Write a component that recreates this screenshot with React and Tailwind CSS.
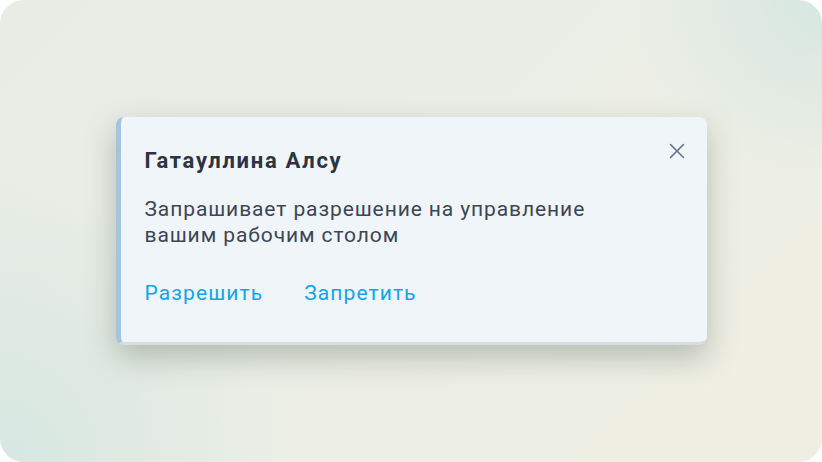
import React from "react";

export default function App() {
  return (
    <div className="w-[822px] h-[462px] bg-white" style={{ fontFamily: "Roboto, 'Noto Sans', sans-serif" }}>
      <div className="w-full h-full rounded-[24px] overflow-hidden flex items-center justify-center bg-[linear-gradient(135deg,#e7ece5_0%,#ebeee6_45%,#eeefe4_75%,#efeee2_100%)] relative">
        <div className="absolute inset-0 bg-[radial-gradient(circle_at_100%_0%,rgba(195,224,222,0.55),transparent_20%),radial-gradient(circle_at_0%_100%,rgba(200,226,222,0.6),transparent_30%)]" />
        <div className="relative w-[591px] h-[228px] rounded-[8px] bg-[#f0f5fa] border-l-[5px] border-l-[#a3c4e2] border-b-[3px] border-b-[#d9dde2] shadow-[0_12px_30px_rgba(90,105,90,0.38)] pl-[24px] pr-[24px] pt-[29px] flex flex-col">
          <div className="flex items-start justify-between">
            <div className="text-[22px] leading-[30px] font-bold text-[#2a3442] tracking-[1.7px]">Гатауллина Алсу</div>
            <button className="mt-[-7px] mr-[-6px] w-[24px] h-[24px] flex items-center justify-center text-[#62738a]">
              <svg width="16" height="16" viewBox="0 0 16 16" fill="none" stroke="currentColor" strokeWidth="1.6" strokeLinecap="round">
                <path d="M1.5 1.5 L14.5 14.5 M14.5 1.5 L1.5 14.5" />
              </svg>
            </button>
          </div>
          <div className="mt-[20px] text-[21px] leading-[26px] text-[#3c4654] tracking-[0.9px]">
            Запрашивает разрешение на управление
            <br />
            вашим рабочим столом
          </div>
          <div className="mt-[32px] flex gap-[41px] text-[21px] leading-[26px] text-[#0ea7ea] tracking-[1.1px]">
            <span>Разрешить</span>
            <span>Запретить</span>
          </div>
        </div>
      </div>
    </div>
  );
}
